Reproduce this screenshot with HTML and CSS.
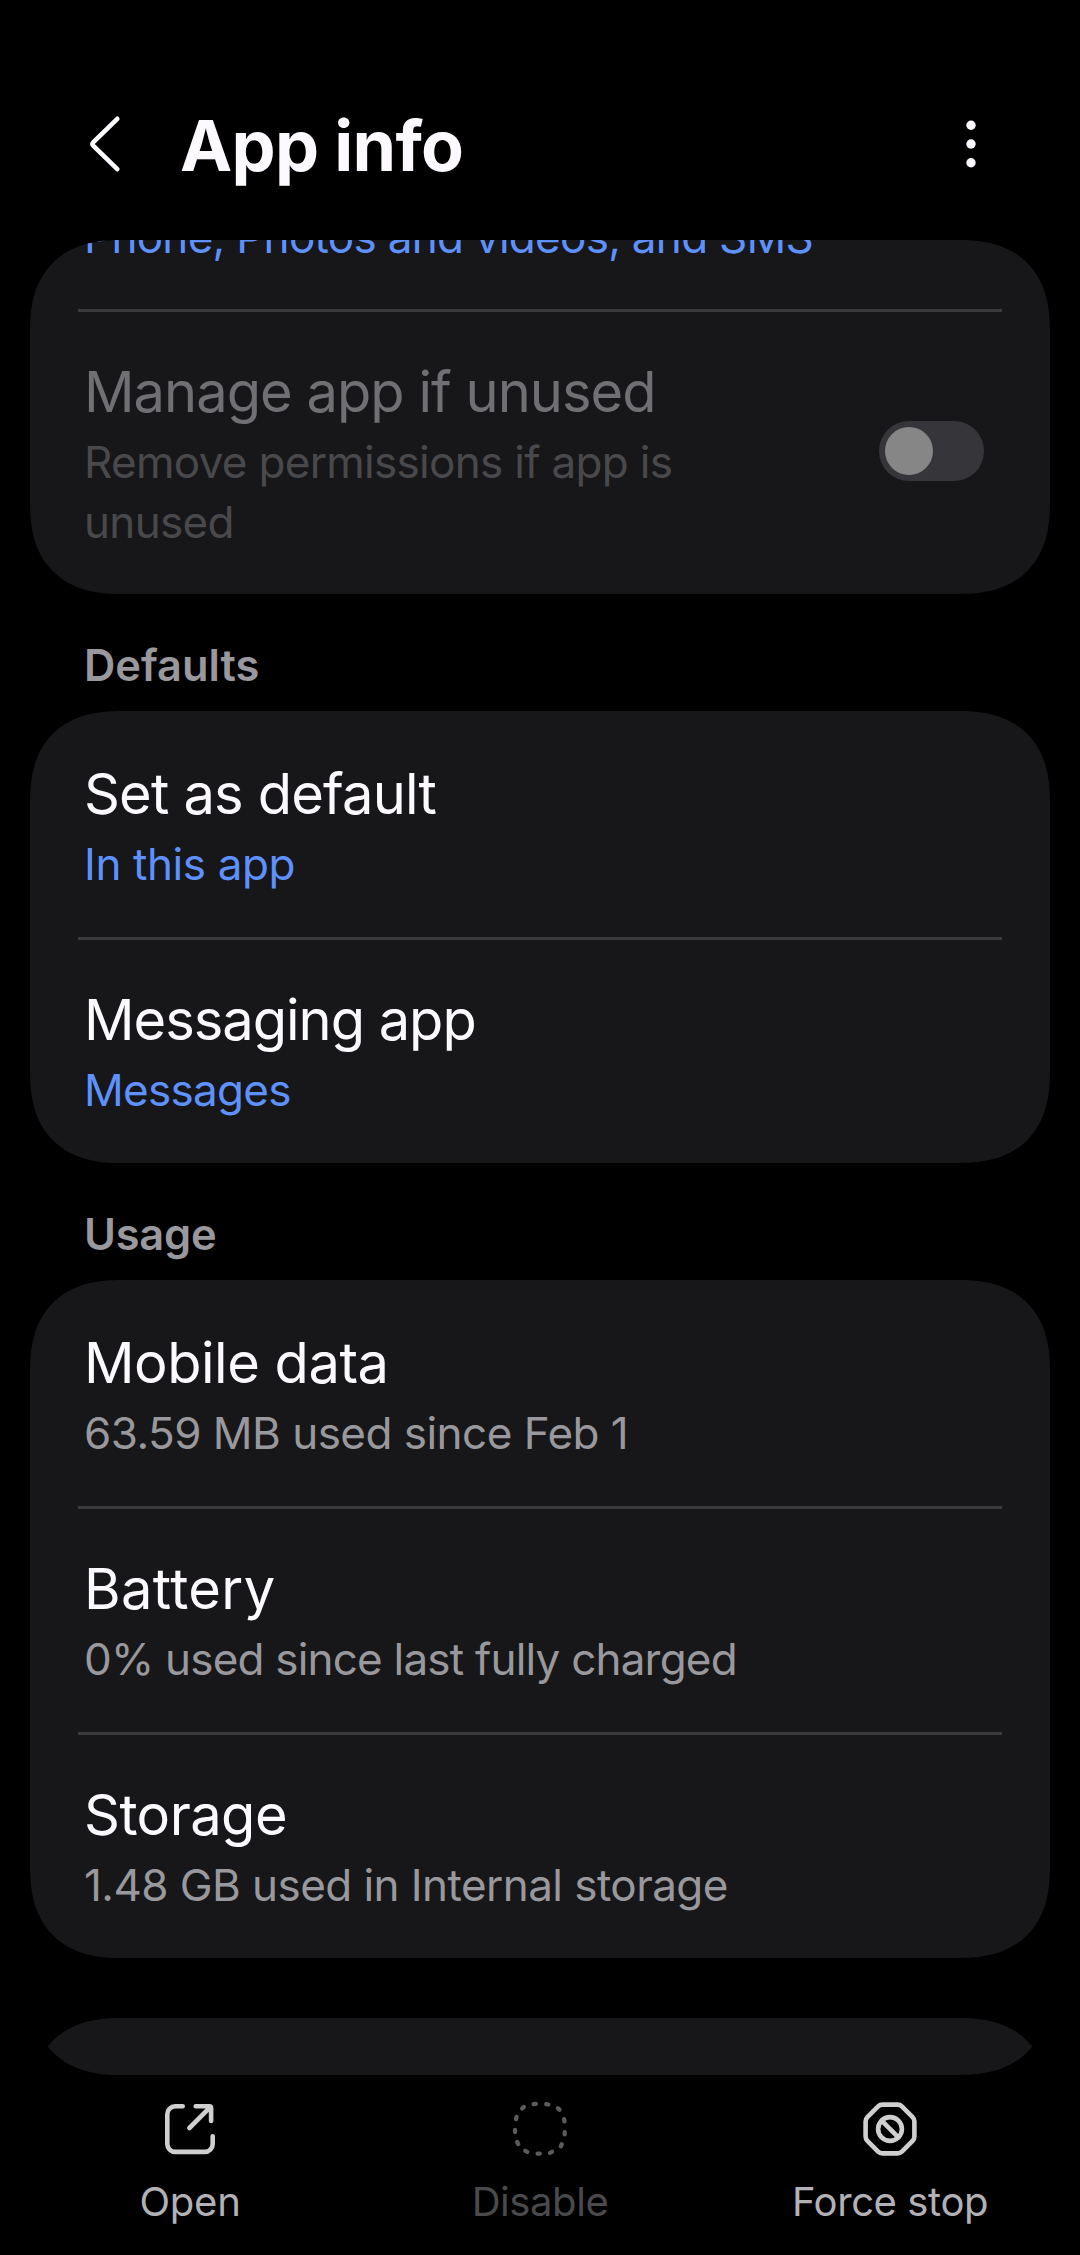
FILE: index.html
```html
<!DOCTYPE html>
<html lang="en">
<head>
<meta charset="utf-8">
<title>App info</title>
<link rel="stylesheet" href="styles.css">
</head>
<body>
<div class="screen">
  <header class="header">
    <svg class="back" viewBox="0 0 40 82" aria-label="Back"><path d="M33.3 15.8 9.2 39.4Q7.8 41 9.2 42.6L33.3 66.2"/></svg>
    <h1 class="heading">App info</h1>
    <svg class="more" viewBox="0 0 20 82" aria-label="More options"><circle cx="10" cy="22.2" r="4.7"/><circle cx="10" cy="41" r="4.7"/><circle cx="10" cy="59.8" r="4.7"/></svg>
  </header>

  <main class="content">
    <section class="card card-first">
      <div class="row row-cut">
        <p class="sub link t-permissions">Phone, Photos and videos, and SMS</p>
      </div>
      <div class="row row-toggle row-disabled">
        <div class="text">
          <h2 class="title t-manage">Manage app if unused</h2>
          <p class="sub t-remove">Remove permissions if app is unused</p>
        </div>
        <span class="toggle"><span class="knob"></span></span>
      </div>
    </section>

    <h3 class="section">Defaults</h3>
    <section class="card">
      <div class="row">
        <h2 class="title t-set">Set as default</h2>
        <p class="sub link t-inapp">In this app</p>
      </div>
      <div class="row">
        <h2 class="title t-messaging">Messaging app</h2>
        <p class="sub link t-messages">Messages</p>
      </div>
    </section>

    <h3 class="section t-usage">Usage</h3>
    <section class="card">
      <div class="row">
        <h2 class="title t-mobile">Mobile data</h2>
        <p class="sub t-data">63.59 MB used since Feb 1</p>
      </div>
      <div class="row">
        <h2 class="title t-battery">Battery</h2>
        <p class="sub t-charged">0% used since last fully charged</p>
      </div>
      <div class="row">
        <h2 class="title t-storage">Storage</h2>
        <p class="sub t-internal">1.48 GB used in Internal storage</p>
      </div>
    </section>

    <section class="card card-next"></section>
  </main>

  <nav class="actions">
    <div class="action">
      <svg class="icon" viewBox="0 0 60 60"><path d="M22.7 7.3H15.3a8 8 0 0 0-8 8V44.9a8 8 0 0 0 8 8H44.7a8 8 0 0 0 8-8V37.3"/><path d="M35.7 7.3H49.5Q51.1 7.3 51.1 8.9V22M29.4 29 50.2 8.2"/></svg>
      <span class="label t-open">Open</span>
    </div>
    <div class="action action-off">
      <svg class="icon" viewBox="0 0 60 60"><path d="M12.1 9.4l1.8-1.4M23.6 5.1l2.2-.2M36.2 5.1l2.2.4M47.9 9.2l1.6 1.6M54.1 20.2l.4 2.2M54.7 33.2v2.2M51.8 45.3l-1 2M42 52.8l-2 1M27.6 54.7h2.2M15.3 51.8l2 1M7.2 43l1 2M5 30.9v2.2M6.5 17.9l-.4 2.2"/></svg>
      <span class="label t-disable">Disable</span>
    </div>
    <div class="action">
      <svg class="icon" viewBox="0 0 60 60"><path d="M22.4 5.6H37.6Q40.1 5.6 41.9 7.4L52.6 18.1Q54.4 19.9 54.4 22.4V37.6Q54.4 40.1 52.6 41.9L41.9 52.6Q40.1 54.4 37.6 54.4H22.4Q19.9 54.4 18.1 52.6L7.4 41.9Q5.6 40.1 5.6 37.6V22.4Q5.6 19.9 7.4 18.1L18.1 7.4Q19.9 5.6 22.4 5.6Z"/><circle cx="30" cy="30" r="11.9"/><path d="M21.6 21.6 38.4 38.4"/></svg>
      <span class="label t-force">Force stop</span>
    </div>
  </nav>
</div>
</body>
</html>
```
FILE: styles.css
```css
* { box-sizing: border-box; margin: 0; padding: 0; }

body {
  background: #000;
  color: #fcfaff;
  font-family: Inter, Roboto, sans-serif;
}

.screen {
  display: flex;
  flex-direction: column;
  width: 1080px;
  height: 2255px;
  overflow: hidden;
}

/* Header */
.header {
  display: flex;
  align-items: flex-start;
  flex: none;
  height: 240px;
  padding: 103px 99px 0 84px;
}
.back { width: 40px; height: 82px; fill: none; stroke: #fcfaff; stroke-width: 4.6; stroke-linecap: round; }
.heading { flex: 1; margin-left: 56px; font-size: 70px; line-height: 86px; font-weight: 700; letter-spacing: -.71px; }
.more { width: 20px; height: 82px; fill: #fcfaff; }

/* Scrolling list, clipped to rounded corners */
.content {
  flex: none;
  height: 1835px;
  margin: 0 30px;
  overflow: hidden;
  border-radius: 78px;
}
.card { background: #171719; border-radius: 78px; overflow: hidden; }
.card-first { border-top-left-radius: 0; border-top-right-radius: 0; }
.card-next { height: 240px; margin-top: 60px; }

@supports (corner-shape: superellipse(1.28)) {
  .content, .card { border-radius: 92px; corner-shape: superellipse(1.28); }
  .card-first { border-top-left-radius: 0; border-top-right-radius: 0; }
}

.row { height: 226px; margin: 0 48px; padding: 49px 6px 0; }
.row + .row { border-top: 3px solid #3a3a3c; padding-top: 46px; }
.row-cut { display: flow-root; height: 69px; padding-top: 0; }
.row-cut .sub { margin-top: -33px; }
.row-toggle { display: flex; justify-content: space-between; height: 285px; padding-right: 18px; }
.text { width: 640px; }

.title { font-size: 56px; line-height: 68px; font-weight: 400; white-space: nowrap; }
.sub { margin-top: 6px; font-size: 44px; line-height: 60px; color: #99989d; }
.link { color: #5e91fc; }
.row-disabled .title { color: #707074; }
.row-disabled .sub { color: #49494c; }

.section {
  height: 117px;
  padding: 45px 54px 0;
  font-size: 43.4px;
  line-height: 52px;
  font-weight: 600;
  color: #99989d;
}

.toggle { width: 105px; height: 60px; margin-top: 63px; padding: 6px; border-radius: 30px; background: #363539; }
.knob { display: block; width: 48px; height: 48px; border-radius: 50%; background: #868686; }

/* Bottom actions */
.actions { display: flex; flex: 1; padding: 24px 15px 0; }
.action { display: flex; flex-direction: column; align-items: center; width: 350px; color: #b2b1b6; }
.icon { width: 60px; height: 60px; fill: none; stroke: #cfcfcf; stroke-width: 4.6; stroke-linecap: round; stroke-linejoin: round; }
.label { margin-top: 19px; font-size: 40px; line-height: 48px; }
.action-off { color: #4a4a4c; }
.action-off .icon { stroke: #5c5c5c; stroke-width: 4.3; }

/* Tracking */
.t-permissions, .t-messages { letter-spacing: -.71px; }
.t-manage { letter-spacing: -.97px; }
.t-remove { letter-spacing: -.69px; }
.t-set { letter-spacing: -.81px; }
.t-inapp { letter-spacing: -.4px; }
.t-messaging { letter-spacing: -1.02px; }
.t-usage { letter-spacing: -.2px; }
.t-mobile { letter-spacing: -.48px; }
.t-data { letter-spacing: -.52px; }
.t-battery { letter-spacing: .37px; }
.t-charged { letter-spacing: -.79px; }
.t-storage { letter-spacing: -.54px; }
.t-internal { letter-spacing: -.56px; }
.t-open { letter-spacing: -.2px; }
.t-disable { letter-spacing: -.42px; }
.t-force { letter-spacing: -.4px; }
```
